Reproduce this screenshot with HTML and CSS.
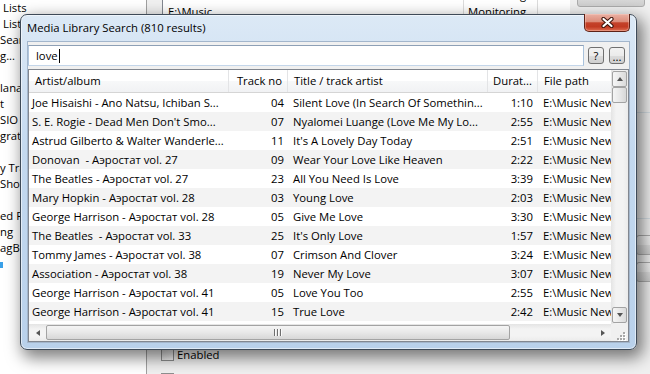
FILE: index.html
```html
<!DOCTYPE html>
<html lang="en">
<head>
    <meta charset="UTF-8" />
    <title>Media Library Search</title>
    <link rel="stylesheet" href="styles.css">
</head>
<body>
    <div class="desk">
        <div class="tree">
            <div class="node ind">Lists</div>
            <div class="node ind">Lists</div>
            <div class="node">Search</div>
            <div class="node">g...</div>
            <div class="node"></div>
            <div class="node">lanager</div>
            <div class="node">t</div>
            <div class="node">SIO</div>
            <div class="node">gration</div>
            <div class="node"></div>
            <div class="node">y Tracks</div>
            <div class="node">Show</div>
            <div class="node"></div>
            <div class="node">ed Path</div>
            <div class="node">ng</div>
            <div class="node">agBox</div>
            <div class="node"><span class="mark"></span></div>
        </div>
        <div class="main">
            <div class="main-left">
                <div class="lv">
                    <div class="lv-row"><span class="c1">E:\Music New</span><span class="c2">Monitoring</span></div>
                    <div class="lv-row"><span class="c1">E:\Music</span><span class="c2">Monitoring</span></div>
                </div>
                <div class="chk"><span class="box"></span>Enabled</div>
                <div class="chk second"><span class="box"></span>Scan at startup</div>
            </div>
            <div class="main-right">
                <div class="btn remove">Remove</div>
                <div class="grp first"></div>
                <div class="grp second"></div>
                <div class="btn side"></div>
                <div class="btn side"></div>
            </div>
        </div>
    </div>

    <div class="dlg">
        <div class="titlebar">Media Library Search (810 results)</div>
        <div class="close">
            <svg width="13" height="11" viewBox="0 0 13 11">
                <path d="M2.5 2 L10.5 9 M10.5 2 L2.5 9" stroke="#3b1209" stroke-width="4.2" stroke-linecap="round"/>
                <path d="M2.5 2 L10.5 9 M10.5 2 L2.5 9" stroke="#ffffff" stroke-width="2.2" stroke-linecap="round"/>
            </svg>
        </div>
        <div class="content">
            <div class="search">
                <div class="field">love<span class="caret"></span></div>
                <div class="sbtn">?</div>
                <div class="sbtn dots">...</div>
            </div>
            <div class="list">
                <div class="view">
                    <div class="head">
                        <div class="col w1">Artist/album</div>
                        <div class="col w2 right">Track no</div>
                        <div class="col w3">Title / track artist</div>
                        <div class="col w4 right">Durat...</div>
                        <div class="col w5">File path</div>
                    </div>
                    <div class="rows">
                        <div class="row"><span class="w1">Joe Hisaishi - Ano Natsu, Ichiban S...</span><span class="w2 right">04</span><span class="w3">Silent Love (In Search Of Somethin...</span><span class="w4 right">1:10</span><span class="w5">E:\Music New\Joe Hisaishi</span></div>
                        <div class="row"><span class="w1">S. E. Rogie - Dead Men Don't Smo...</span><span class="w2 right">07</span><span class="w3">Nyalomei Luange (Love Me My Lo...</span><span class="w4 right">2:55</span><span class="w5">E:\Music New\S. E. Rogie</span></div>
                        <div class="row"><span class="w1">Astrud Gilberto &amp; Walter Wanderle...</span><span class="w2 right">11</span><span class="w3">It's A Lovely Day Today</span><span class="w4 right">2:51</span><span class="w5">E:\Music New\Astrud Gilberto</span></div>
                        <div class="row"><span class="w1">Donovan&nbsp; - Аэростат vol. 27</span><span class="w2 right">09</span><span class="w3">Wear Your Love Like Heaven</span><span class="w4 right">2:22</span><span class="w5">E:\Music New\Аэростат</span></div>
                        <div class="row"><span class="w1">The Beatles - Аэростат vol. 27</span><span class="w2 right">23</span><span class="w3">All You Need Is Love</span><span class="w4 right">3:39</span><span class="w5">E:\Music New\Аэростат</span></div>
                        <div class="row"><span class="w1">Mary Hopkin - Аэростат vol. 28</span><span class="w2 right">03</span><span class="w3">Young Love</span><span class="w4 right">2:03</span><span class="w5">E:\Music New\Аэростат</span></div>
                        <div class="row"><span class="w1">George Harrison - Аэростат vol. 28</span><span class="w2 right">05</span><span class="w3">Give Me Love</span><span class="w4 right">3:30</span><span class="w5">E:\Music New\Аэростат</span></div>
                        <div class="row"><span class="w1">The Beatles&nbsp; - Аэростат vol. 33</span><span class="w2 right">25</span><span class="w3">It's Only Love</span><span class="w4 right">1:57</span><span class="w5">E:\Music New\Аэростат</span></div>
                        <div class="row"><span class="w1">Tommy James - Аэростат vol. 38</span><span class="w2 right">07</span><span class="w3">Crimson And Clover</span><span class="w4 right">3:24</span><span class="w5">E:\Music New\Аэростат</span></div>
                        <div class="row"><span class="w1">Association - Аэростат vol. 38</span><span class="w2 right">19</span><span class="w3">Never My Love</span><span class="w4 right">3:07</span><span class="w5">E:\Music New\Аэростат</span></div>
                        <div class="row"><span class="w1">George Harrison - Аэростат vol. 41</span><span class="w2 right">05</span><span class="w3">Love You Too</span><span class="w4 right">2:55</span><span class="w5">E:\Music New\Аэростат</span></div>
                        <div class="row"><span class="w1">George Harrison - Аэростат vol. 41</span><span class="w2 right">15</span><span class="w3">True Love</span><span class="w4 right">2:42</span><span class="w5">E:\Music New\Аэростат</span></div>
                        <div class="row"><span class="w1">Elvis Presley - Аэростат vol. 44</span><span class="w2 right">02</span><span class="w3">Love Me Tender</span><span class="w4 right">2:41</span><span class="w5">E:\Music New\Аэростат</span></div>
                    </div>
                </div>
                <div class="vs">
                    <div class="sb-btn"><span class="arr up"></span></div>
                    <div class="thumb"></div>
                    <div class="fill"></div>
                    <div class="sb-btn"><span class="arr down"></span></div>
                </div>
                <div class="hs">
                    <div class="sb-flat"><span class="arr left"></span></div>
                    <div class="hthumb"><span class="grip"></span></div>
                    <div class="fill"></div>
                    <div class="sb-flat"><span class="arr right"></span></div>
                </div>
                <div class="corner">
                    <svg width="17" height="17" viewBox="0 0 17 17">
                        <g fill="#ffffff">
                            <rect x="13" y="9" width="2" height="2"/><rect x="10" y="12" width="2" height="2"/><rect x="13" y="12" width="2" height="2"/>
                            <rect x="7" y="15" width="2" height="2"/><rect x="10" y="15" width="2" height="2"/><rect x="13" y="15" width="2" height="2"/>
                        </g>
                        <g fill="#a8a8a8">
                            <rect x="12" y="8" width="2" height="2"/><rect x="9" y="11" width="2" height="2"/><rect x="12" y="11" width="2" height="2"/>
                            <rect x="6" y="14" width="2" height="2"/><rect x="9" y="14" width="2" height="2"/><rect x="12" y="14" width="2" height="2"/>
                        </g>
                    </svg>
                </div>
            </div>
        </div>
    </div>
</body>
</html>
```

FILE: styles.css
```css
* {
    box-sizing: border-box;
}
body {
    margin: 0;
    width: 650px;
    height: 374px;
    overflow: hidden;
    position: relative;
    font-family: 'Open Sans', 'Noto Sans', sans-serif;
    font-size: 11.3px;
    color: #000;
    background: #f0f0f0;
}

/* background application */
.desk {
    display: flex;
    height: 374px;
}
.tree {
    width: 147px;
    padding-top: 0;
    background: #fff;
    border-right: 1px solid #a0a0a0;
    overflow: hidden;
}
.node {
    height: 16px;
    line-height: 16px;
    white-space: nowrap;
}
.node.ind {
    padding-left: 3px;
}
.mark {
    display: inline-block;
    width: 3px;
    height: 6px;
    background: #3aa0e8;
    vertical-align: middle;
}
.main {
    flex: 1;
    display: flex;
}
.main-left {
    flex: 1;
    padding-left: 14px;
}
.lv {
    margin: -14px 0 0 1px;
    width: 408px;
    height: 126px;
    background: #fff;
    border-left: 1px solid #828790;
    border-bottom: 1px solid #828790;
}
.lv-row {
    display: flex;
    height: 17px;
    line-height: 17px;
}
.lv-row span {
    white-space: nowrap;
    overflow: hidden;
}
.lv .c1 {
    width: 301px;
    padding-left: 5px;
    border-right: 1px solid #dcdcdc;
}
.lv .c2 {
    width: 74px;
    padding-left: 4px;
    border-right: 1px solid #dcdcdc;
}
.chk {
    display: flex;
    align-items: center;
    gap: 3px;
    height: 13px;
    margin-top: 236px;
}
.chk.second {
    margin-top: 12px;
}
.box {
    width: 13px;
    height: 13px;
    border: 1px solid #8e8f8f;
    background: linear-gradient(135deg, #dcdcdc, #fbfbfb);
}
.main-right {
    width: 73px;
}
.btn {
    border: 1px solid #acacac;
    border-radius: 3px;
    background: linear-gradient(#f2f2f2 0%, #ebebeb 50%, #dddddd 50%, #cfcfcf 100%);
}
.remove {
    width: 68px;
    height: 23px;
    margin-top: -16px;
    line-height: 21px;
    text-align: center;
    color: #838383;
}
.grp {
    border-top: 1px solid #d5dfe5;
}
.grp.first {
    margin-top: 105px;
}
.grp.second {
    margin-top: 105px;
}
.btn.side {
    width: 30px;
    height: 20px;
    margin: 16px 0 0 59px;
}
.btn.side + .btn.side {
    margin-top: 7px;
}

/* dialog */
.dlg {
    position: absolute;
    left: 20px;
    top: 14px;
    width: 617px;
    height: 336px;
    padding: 0 6px 6px;
    display: flex;
    flex-direction: column;
    border: 1px solid #3e4a58;
    border-radius: 7px;
    background: linear-gradient(#dce9f6, #c4d9ef 40%, #b9d1eb);
    box-shadow: 4px 6px 16px 2px rgba(0,0,0,0.5), inset 0 0 0 1px rgba(255,255,255,0.55);
}
.titlebar {
    height: 26px;
    line-height: 25px;
    white-space: nowrap;
}
.close {
    position: absolute;
    top: -1px;
    right: 6px;
    width: 46px;
    height: 18px;
    display: flex;
    align-items: center;
    justify-content: center;
    border: 1px solid #5e2217;
    border-top: none;
    border-radius: 0 0 5px 5px;
    background: linear-gradient(#eab0a3 0%, #dc8c79 45%, #c4422a 52%, #c13a22 75%, #de6d51 100%);
    box-shadow: inset 0 0 0 1px rgba(255,220,210,0.35);
}
.content {
    flex: 1;
    display: flex;
    flex-direction: column;
    min-height: 0;
    background: #f0f0f0;
    border: 1px solid #a3b6cc;
}
.search {
    display: flex;
    align-items: flex-start;
    margin-top: 3px;
    padding-right: 4px;
}
.field {
    flex: 1;
    height: 21px;
    margin-right: 4px;
    padding-left: 7px;
    line-height: 19px;
    background: #fff;
    border: 1px solid;
    border-color: #8ea0b6 #a9c2dc #c4d6ea #b0c6de;
}
.caret {
    display: inline-block;
    width: 1px;
    height: 14px;
    margin-left: 1px;
    background: #000;
    vertical-align: -3px;
}
.sbtn {
    width: 16px;
    height: 17px;
    margin-top: 2px;
    line-height: 15px;
    text-align: center;
    border: 1px solid #707070;
    border-radius: 3px;
    background: linear-gradient(#f2f2f2 0%, #ebebeb 50%, #dddddd 50%, #cfcfcf 100%);
}
.sbtn.dots {
    margin-left: 5px;
    line-height: 17px;
}

/* list view */
.list {
    flex: 1;
    min-height: 0;
    margin-top: 3px;
    display: grid;
    grid-template-columns: 1fr 17px;
    grid-template-rows: 1fr 17px;
    background: #fff;
    border: 1px solid #828790;
}
.view {
    overflow: hidden;
    min-width: 0;
}
.head {
    display: flex;
    height: 23px;
    border-bottom: 1px solid #d5d5d5;
    background: linear-gradient(#ffffff 50%, #f7f8f9 50%, #f1f2f4 100%);
}
.head .col {
    line-height: 22px;
    border-right: 1px solid #e3e4e6;
}
.w1, .w2, .w3, .w4, .w5 {
    flex: none;
    overflow: hidden;
    white-space: nowrap;
}
.w1 { width: 200px; padding-left: 3px; }
.w2 { width: 59px; padding-right: 4px; }
.w3 { width: 200px; padding-left: 5px; }
.w4 { width: 50px; padding-right: 5px; }
.w5 { width: 150px; padding-left: 5px; }
.head .w1 { padding-left: 6px; }
.head .w2 { padding-right: 5px; }
.head .w3 { padding-left: 6px; }
.head .w5 { padding-left: 6px; }
.right {
    text-align: right;
}
.row {
    display: flex;
    height: 19px;
    line-height: 19px;
}
.row:nth-child(even) {
    background: #f3f3f3;
}

/* scrollbars */
.vs {
    display: flex;
    flex-direction: column;
    padding: 1px;
    background: linear-gradient(90deg, #e4e4e4, #f3f3f3 30%, #f3f3f3 70%, #ebebeb);
}
.sb-btn, .thumb, .hthumb {
    border: 1px solid #a3a3a3;
    border-radius: 2px;
}
.sb-btn {
    height: 16px;
    display: flex;
    align-items: center;
    justify-content: center;
    background: linear-gradient(90deg, #f6f6f6, #e9e9e9 50%, #dadada);
}
.thumb {
    height: 16px;
    background: linear-gradient(90deg, #f5f5f5, #e8e8e8 50%, #d7d7d7);
}
.fill {
    flex: 1;
}
.hs {
    display: flex;
    padding: 1px 0;
    background: linear-gradient(#e4e4e4, #f3f3f3 30%, #f3f3f3 70%, #ebebeb);
}
.sb-flat {
    width: 17px;
    display: flex;
    align-items: center;
    justify-content: center;
}
.hthumb {
    width: 464px;
    display: flex;
    align-items: center;
    justify-content: center;
    background: linear-gradient(#f5f5f5, #e8e8e8 50%, #d7d7d7);
}
.grip {
    width: 8px;
    height: 7px;
    background: repeating-linear-gradient(90deg, #6f6f6f 0 1px, #fbfbfb 1px 2px, transparent 2px 3px);
}
.corner {
    background: #f0f0f0;
}
.corner svg {
    display: block;
}
.arr {
    width: 0;
    height: 0;
}
.arr.up {
    border-left: 3.5px solid transparent;
    border-right: 3.5px solid transparent;
    border-bottom: 4px solid #555;
}
.arr.down {
    border-left: 3.5px solid transparent;
    border-right: 3.5px solid transparent;
    border-top: 4px solid #555;
}
.arr.left {
    border-top: 3.5px solid transparent;
    border-bottom: 3.5px solid transparent;
    border-right: 4px solid #555;
}
.arr.right {
    border-top: 3.5px solid transparent;
    border-bottom: 3.5px solid transparent;
    border-left: 4px solid #555;
}
```
